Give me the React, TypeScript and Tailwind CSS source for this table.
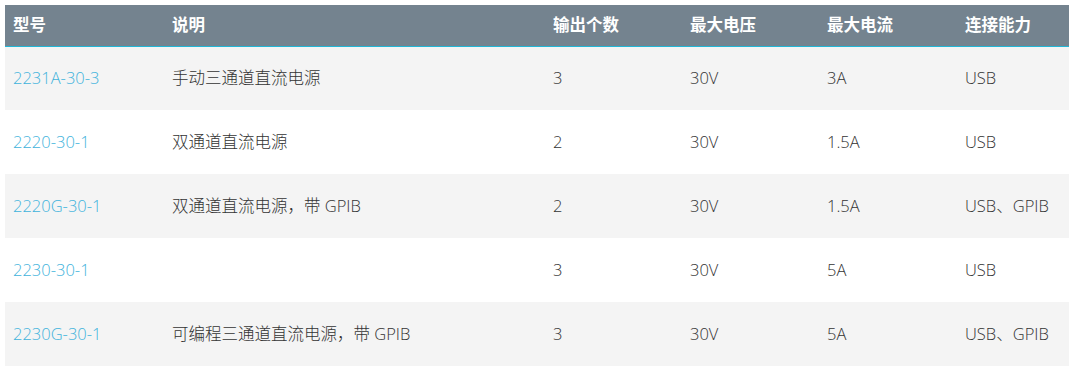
const cols = [
  { label: "型号", w: "w-[159px]" },
  { label: "说明", w: "w-[381px]" },
  { label: "输出个数", w: "w-[137px]" },
  { label: "最大电压", w: "w-[137px]" },
  { label: "最大电流", w: "w-[138px]" },
  { label: "连接能力", w: "w-[112px]" },
];

type Row = {
  model: string;
  desc: string;
  outputs: string;
  volts: string;
  amps: string;
  io: string;
};

const rows: Row[] = [
  { model: "2231A-30-3", desc: "手动三通道直流电源", outputs: "3", volts: "30V", amps: "3A", io: "USB" },
  { model: "2220-30-1", desc: "双通道直流电源", outputs: "2", volts: "30V", amps: "1.5A", io: "USB" },
  { model: "2220G-30-1", desc: "双通道直流电源，带 GPIB", outputs: "2", volts: "30V", amps: "1.5A", io: "USB、GPIB" },
  { model: "2230-30-1", desc: "", outputs: "3", volts: "30V", amps: "5A", io: "USB" },
  { model: "2230G-30-1", desc: "可编程三通道直流电源，带 GPIB", outputs: "3", volts: "30V", amps: "5A", io: "USB、GPIB" },
];

export default function App() {
  return (
    <div className="min-h-[379px] bg-white pl-[5px] pt-[5px] font-['Open_Sans','Noto_Sans_CJK_SC',sans-serif]">
      <table className="w-[1064px] table-fixed border-collapse text-[16.5px]">
        <colgroup>
          {cols.map((c) => (
            <col key={c.label} className={c.w} />
          ))}
        </colgroup>
        <thead>
          <tr className="h-[41px] border-b border-[#22b6d6] bg-[#74838f] text-left">
            {cols.map((c) => (
              <th key={c.label} className="px-2 font-bold text-white">
                {c.label}
              </th>
            ))}
          </tr>
        </thead>
        <tbody className="font-light text-[#333]">
          {rows.map((r, i) => (
            <tr key={r.model} className={`h-16 ${i % 2 === 0 ? "bg-[#f4f4f4]" : "bg-white"}`}>
              <td className="px-2 pt-px align-middle">
                <a href="#" className="text-[#3fb3dc]">
                  {r.model}
                </a>
              </td>
              <td className="px-2 pt-px align-middle">{r.desc}</td>
              <td className="px-2 pt-px align-middle">{r.outputs}</td>
              <td className="px-2 pt-px align-middle">{r.volts}</td>
              <td className="px-2 pt-px align-middle">{r.amps}</td>
              <td className="px-2 pt-px align-middle">{r.io}</td>
            </tr>
          ))}
        </tbody>
      </table>
    </div>
  );
}
